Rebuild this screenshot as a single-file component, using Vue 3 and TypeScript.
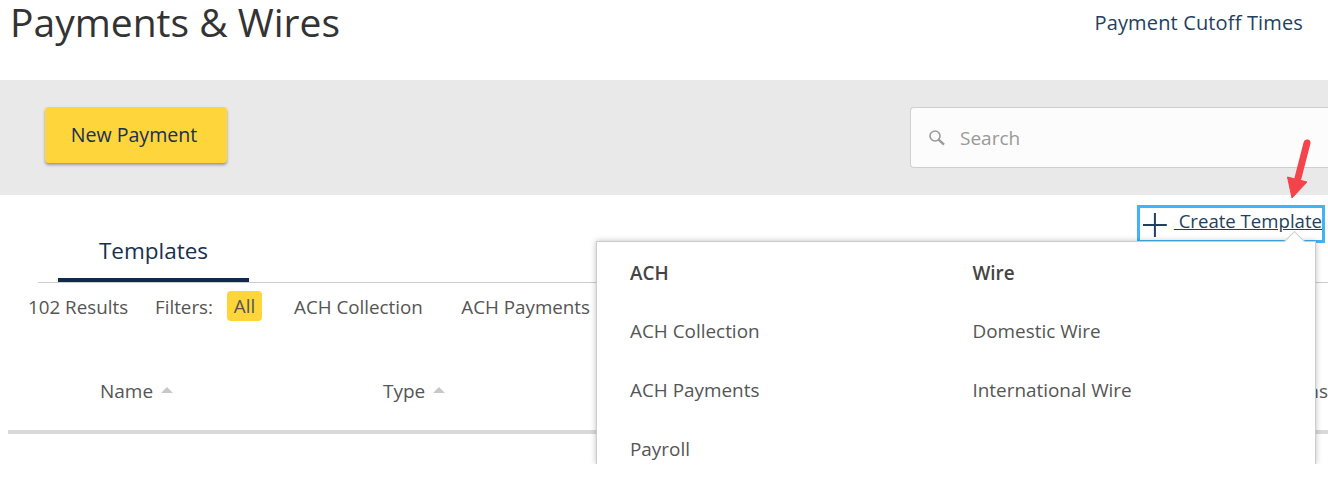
<script setup lang="ts">
const achItems: string[] = ['ACH Collection', 'ACH Payments', 'Payroll']
const wireItems: string[] = ['Domestic Wire', 'International Wire']
</script>

<template>
  <div class="page">
    <header class="top">
      <h1>Payments &amp; Wires</h1>
      <a class="cutoff">Payment Cutoff Times</a>
    </header>

    <section class="band">
      <button class="primary">New Payment</button>
      <div class="search">
        <svg width="18" height="18" viewBox="0 0 18 18" fill="none">
          <circle cx="7" cy="7" r="5" stroke="#9a9a9a" stroke-width="1.6" />
          <path d="M10.6 10.6 16 15.6" stroke="#9a9a9a" stroke-width="2.4" />
        </svg>
        <span>Search</span>
      </div>
    </section>

    <section class="actions">
      <a class="create">
        <svg width="24" height="24" viewBox="0 0 24 24">
          <path d="M12 0v24M0 12h24" stroke="#233f60" stroke-width="2" />
        </svg>
        <span>&nbsp;Create Template</span>
      </a>
    </section>

    <nav class="tabs">
      <div class="tab">Templates</div>
    </nav>

    <div class="filters">
      <span class="results">102 Results</span>
      <span class="label">Filters:</span>
      <span class="chip">All</span>
      <span class="filter first">ACH Collection</span>
      <span class="filter">ACH Payments</span>
    </div>

    <div class="thead">
      <span class="col name">Name <i class="sort"></i></span>
      <span class="col type">Type <i class="sort"></i></span>
      <span class="col last">Actions</span>
    </div>

    <div class="menu">
      <i class="caret"></i>
      <div class="menu-col">
        <div class="menu-head">ACH</div>
        <div v-for="item in achItems" :key="item" class="menu-item">{{ item }}</div>
      </div>
      <div class="menu-col">
        <div class="menu-head">Wire</div>
        <div v-for="item in wireItems" :key="item" class="menu-item">{{ item }}</div>
      </div>
    </div>

    <svg class="arrow" width="36" height="66" viewBox="0 0 36 66">
      <path d="M30 8 21 43" stroke="#f4434a" stroke-width="7" stroke-linecap="round" />
      <path d="M10.500 42 30 47 15 63Z" fill="#f4434a" stroke="#f4434a" stroke-width="1" stroke-linejoin="round" />
    </svg>
  </div>
</template>

<style>
html, body { margin: 0; background: #fff; }
</style>

<style scoped>
.page {
  position: relative;
  width: 1328px;
  height: 481px;
  overflow: hidden;
  background: #fff;
  font-family: "Open Sans", "Liberation Sans", sans-serif;
  color: #444;
}
.top {
  display: flex;
  justify-content: space-between;
  height: 80px;
  padding: 0 25px 0 10px;
  box-sizing: border-box;
}
h1 {
  margin: 0;
  font-size: 39px;
  line-height: 44px;
  font-weight: 400;
  color: #333;
}
.cutoff {
  font-size: 20px;
  line-height: 46px;
  letter-spacing: .15px;
  color: #233f60;
}
.band {
  display: flex;
  justify-content: space-between;
  align-items: flex-start;
  height: 115px;
  padding: 27px 0 0 45px;
  box-sizing: border-box;
  background: #e9e9e9;
}
.primary {
  width: 182px;
  height: 56px;
  padding: 0 4px 2px 0;
  border: 0;
  border-radius: 4px;
  background: #ffd53c;
  box-shadow: 0 2px 3px rgba(0, 0, 0, .35);
  color: #18304f;
  font: 500 19.600px "Open Sans", sans-serif;
}
.search {
  display: flex;
  align-items: center;
  gap: 14px;
  width: 418px;
  height: 61px;
  box-sizing: border-box;
  padding-left: 17px;
  background: #fcfcfc;
  border: 1px solid #cfcfcf;
  border-right: 0;
  border-radius: 4px 0 0 4px;
  color: #999;
  font-size: 19px;
}
.actions {
  display: flex;
  justify-content: flex-end;
  padding: 10px 3px 0 0;
  height: 48px;
  box-sizing: border-box;
}
.create {
  display: flex;
  align-items: center;
  width: 188px;
  height: 38px;
  box-sizing: border-box;
  padding: 2px 0 0 3px;
  border: 3px solid #42b4f5;
  color: #233f60;
  font-size: 18.600px;
  white-space: nowrap;
}
.create span {
  text-decoration: underline;
  margin: -9px 0 0 7px;
}
.tabs {
  height: 39px;
  margin-left: 38px;
  border-bottom: 1px solid #ccc;
  display: flex;
}
.tab {
  width: 191px;
  height: 39px;
  box-sizing: border-box;
  margin-left: 20px;
  text-align: center;
  font-size: 22.500px;
  line-height: 16px;
  color: #18304f;
  border-bottom: 4px solid #0f2a4d;
}
.filters {
  display: flex;
  align-items: center;
  height: 30px;
  margin-top: 8px;
  padding-left: 28px;
  font-size: 18.800px;
  color: #555;
}
.results { width: 127px; }
.label { width: 72px; }
.chip {
  width: 35px;
  height: 30px;
  line-height: 30px;
  text-align: center;
  border-radius: 4px;
  background: #ffd53c;
}
.results, .label, .filter { padding-top: 2px; }
.filter { margin-left: 38.500px; }
.filter.first { margin-left: 32px; }
.thead {
  display: flex;
  align-items: flex-start;
  height: 113px;
  box-sizing: border-box;
  padding-top: 55px;
  margin-left: 8px;
  border-bottom: 4px solid #d8d9da;
  font-size: 19px;
  line-height: 30px;
  color: #555;
}
.col { white-space: nowrap; }
.name { margin-left: 92px; width: 283px; }
.type { width: 200px; }
.last { margin-left: auto; }
.sort {
  display: inline-block;
  width: 0;
  height: 0;
  margin: 0 0 5px 3px;
  vertical-align: middle;
  border-left: 6px solid transparent;
  border-right: 6px solid transparent;
  border-bottom: 6px solid #c6c9cc;
}
.menu {
  position: absolute;
  left: 596px;
  top: 241px;
  width: 720px;
  height: 223px;
  box-sizing: border-box;
  display: flex;
  padding: 15px 0 0 33px;
  background: #fff;
  border: 1px solid #ccc;
  border-bottom: 0;
  box-shadow: 0 0 6px rgba(0, 0, 0, .25);
  clip-path: inset(-10px -10px 0 -10px);
  font-size: 18.900px;
  color: #555;
}
.menu-col { width: 343.500px; }
.menu-head {
  height: 32px;
  line-height: 32px;
  font-weight: 600;
  color: #444;
}
.menu-item {
  height: 59px;
  line-height: 59px;
}
.menu-head + .menu-item { margin-top: 13px; }
.caret {
  position: absolute;
  right: 13px;
  top: -8px;
  width: 14px;
  height: 14px;
  background: #fff;
  border-top: 1px solid #ccc;
  border-left: 1px solid #ccc;
  transform: rotate(45deg);
}
.arrow {
  position: absolute;
  left: 1277px;
  top: 135px;
}
</style>
